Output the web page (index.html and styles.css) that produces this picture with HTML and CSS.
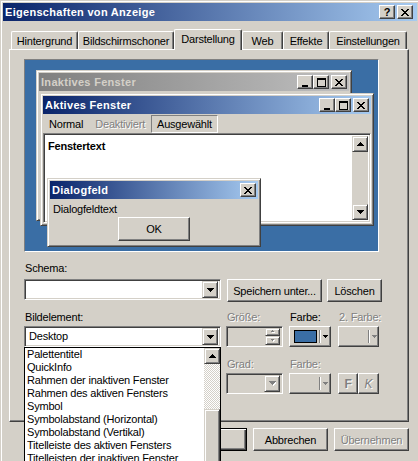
FILE: index.html
```html
<!DOCTYPE html>
<html lang="de">
<head>
<meta charset="utf-8">
<title>Eigenschaften von Anzeige</title>
<link rel="stylesheet" href="styles.css">
</head>
<body>
<div class="win">
  <div class="titlebar">
    <span class="title-text">Eigenschaften von Anzeige</span>
    <div class="cap-btns">
      <span class="cap raised help">?</span>
      <span class="cap raised"><svg class="g" width="9" height="9" viewBox="0 0 9 9" shape-rendering="crispEdges"><path d="M0 1h2v1H0zM6 1h2v1H6zM1 2h2v1H1zM5 2h2v1H5zM2 3h4v1H2zM3 4h2v1H3zM2 5h4v1H2zM1 6h2v1H1zM5 6h2v1H5zM0 7h2v1H0zM6 7h2v1H6z"/></svg></span>
    </div>
  </div>

  <div class="tabs">
    <div class="tab t-hint">Hintergrund</div>
    <div class="tab t-bild">Bildschirmschoner</div>
    <div class="tab sel t-dar">Darstellung</div>
    <div class="tab t-web">Web</div>
    <div class="tab t-eff">Effekte</div>
    <div class="tab t-ein">Einstellungen</div>
  </div>

  <div class="panel">
    <div class="preview">
      <div class="pwin inactive">
        <div class="ptitle gray">
          <span class="ptext">Inaktives Fenster</span>
          <div class="pcaps">
            <span class="cap raised"><svg width="9" height="9" viewBox="0 0 9 9" shape-rendering="crispEdges"><path d="M1 7h6v2H1z"/></svg></span>
            <span class="cap raised"><svg width="9" height="9" viewBox="0 0 9 9" shape-rendering="crispEdges" fill-rule="evenodd"><path d="M0 0h9v9H0zM1 2v6h7V2z"/></svg></span>
            <span class="cap raised close"><svg width="9" height="9" viewBox="0 0 9 9" shape-rendering="crispEdges"><path d="M0 1h2v1H0zM6 1h2v1H6zM1 2h2v1H1zM5 2h2v1H5zM2 3h4v1H2zM3 4h2v1H3zM2 5h4v1H2zM1 6h2v1H1zM5 6h2v1H5zM0 7h2v1H0zM6 7h2v1H6z"/></svg></span>
          </div>
        </div>
      </div>

      <div class="pwin active">
        <div class="ptitle blue">
          <span class="ptext">Aktives Fenster</span>
          <div class="pcaps">
            <span class="cap raised"><svg width="9" height="9" viewBox="0 0 9 9" shape-rendering="crispEdges"><path d="M1 7h6v2H1z"/></svg></span>
            <span class="cap raised"><svg width="9" height="9" viewBox="0 0 9 9" shape-rendering="crispEdges" fill-rule="evenodd"><path d="M0 0h9v9H0zM1 2v6h7V2z"/></svg></span>
            <span class="cap raised close"><svg width="9" height="9" viewBox="0 0 9 9" shape-rendering="crispEdges"><path d="M0 1h2v1H0zM6 1h2v1H6zM1 2h2v1H1zM5 2h2v1H5zM2 3h4v1H2zM3 4h2v1H3zM2 5h4v1H2zM1 6h2v1H1zM5 6h2v1H5zM0 7h2v1H0zM6 7h2v1H6z"/></svg></span>
          </div>
        </div>
        <div class="menu">
          <span class="mi">Normal</span>
          <span class="mi dis">Deaktiviert</span>
          <span class="mi sel">Ausgewählt</span>
        </div>
        <div class="client sunken">
          <div class="ctext">Fenstertext</div>
          <div class="vscroll">
            <span class="sbtn raised2"><svg width="7" height="4" viewBox="0 0 7 4" shape-rendering="crispEdges"><path d="M3 0h1v1h1v1h1v1h1v1H0V3h1V2h1V1h1z"/></svg></span>
            <span class="strack"></span>
            <span class="sbtn raised2"><svg width="7" height="4" viewBox="0 0 7 4" shape-rendering="crispEdges"><path d="M0 0h7v1H6v1H5v1H4v1H3V3H2V2H1V1H0z"/></svg></span>
          </div>
        </div>
      </div>

      <div class="pwin dialog">
        <div class="ptitle blue">
          <span class="ptext">Dialogfeld</span>
          <div class="pcaps">
            <span class="cap raised"><svg width="9" height="9" viewBox="0 0 9 9" shape-rendering="crispEdges"><path d="M0 1h2v1H0zM6 1h2v1H6zM1 2h2v1H1zM5 2h2v1H5zM2 3h4v1H2zM3 4h2v1H3zM2 5h4v1H2zM1 6h2v1H1zM5 6h2v1H5zM0 7h2v1H0zM6 7h2v1H6z"/></svg></span>
          </div>
        </div>
        <div class="dtext">Dialogfeldtext</div>
        <div class="drow"><span class="btn raised dok">OK</span></div>
      </div>
    </div>

    <div class="lbl schema-lbl">Schema:</div>
    <div class="schema-row">
      <div class="combo sunken wide">
        <span class="cval"></span>
        <span class="dd raised2"><svg width="7" height="4" viewBox="0 0 7 4" shape-rendering="crispEdges"><path d="M0 0h7v1H6v1H5v1H4v1H3V3H2V2H1V1H0z"/></svg></span>
      </div>
      <span class="btn raised b-save">Speichern unter...</span>
      <span class="btn raised b-del">Löschen</span>
    </div>

    <div class="grid">
      <div class="lbl r1 c1">Bildelement:</div>
      <div class="lbl r1 c2 dis">Größe:</div>
      <div class="lbl r1 c3">Farbe:</div>
      <div class="lbl r1 c4 dis">2. Farbe:</div>

      <div class="combo sunken c1">
        <span class="cval">Desktop</span>
        <span class="dd raised2"><svg width="7" height="4" viewBox="0 0 7 4" shape-rendering="crispEdges"><path d="M0 0h7v1H6v1H5v1H4v1H3V3H2V2H1V1H0z"/></svg></span>
      </div>
      <div class="combo sunken off c2">
        <span class="cval"></span>
        <span class="spin">
          <span class="sp raised2 top"><svg width="6" height="4" viewBox="0 0 6 4" shape-rendering="crispEdges"><path fill="#fff" d="M3 1h1v1h1v1H2V2h1z"/><path fill="#808080" d="M2 0h1v1h1v1H1V1h1z"/></svg></span>
          <span class="sp raised2 bot"><svg width="6" height="4" viewBox="0 0 6 4" shape-rendering="crispEdges"><path fill="#fff" d="M2 1h3v1H4v1H3V2H2z"/><path fill="#808080" d="M1 0h3v1H3v1H2V1H1z"/></svg></span>
        </span>
      </div>
      <div class="cbtn raised c3">
        <span class="swatch"></span>
        <span class="divider"></span>
        <svg width="5" height="3" viewBox="0 0 5 3" shape-rendering="crispEdges"><path d="M0 0h5v1H4v1H3v1H2V2H1V1H0z"/></svg>
      </div>
      <div class="cbtn raised off c4">
        <span class="swatch"></span>
        <span class="divider"></span>
        <svg width="5" height="3" viewBox="0 0 5 3" shape-rendering="crispEdges"><path fill="#808080" d="M0 0h5v1H4v1H3v1H2V2H1V1H0z"/></svg>
      </div>

      <div class="lbl r3 c2 dis">Grad:</div>
      <div class="lbl r3 c3 dis">Farbe:</div>

      <div class="combo sunken off c2">
        <span class="cval"></span>
        <span class="dd raised2"><svg width="7" height="5" viewBox="0 0 7 5" shape-rendering="crispEdges"><path fill="#fff" d="M1 1h7v1H7v1H6v1H5v1H4V4H3V3H2V2H1z"/><path fill="#808080" d="M0 0h7v1H6v1H5v1H4v1H3V3H2V2H1V1H0z"/></svg></span>
      </div>
      <div class="cbtn raised off c3">
        <span class="swatch"></span>
        <span class="divider"></span>
        <svg width="5" height="3" viewBox="0 0 5 3" shape-rendering="crispEdges"><path fill="#808080" d="M0 0h5v1H4v1H3v1H2V2H1V1H0z"/></svg>
      </div>
      <div class="fk c4">
        <span class="btn raised sq bold dis">F</span>
        <span class="btn raised sq ital dis">K</span>
      </div>
    </div>
  </div>

  <div class="actions">
    <span class="btn raised act def">OK</span>
    <span class="btn raised act">Abbrechen</span>
    <span class="btn raised act dis">Übernehmen</span>
  </div>
</div>

<div class="droplist">
  <div class="items">
    <div class="it">Palettentitel</div>
    <div class="it">QuickInfo</div>
    <div class="it">Rahmen der inaktiven Fenster</div>
    <div class="it">Rahmen des aktiven Fensters</div>
    <div class="it">Symbol</div>
    <div class="it">Symbolabstand (Horizontal)</div>
    <div class="it">Symbolabstand (Vertikal)</div>
    <div class="it">Titelleiste des aktiven Fensters</div>
    <div class="it">Titelleisten der inaktiven Fenster</div>
  </div>
  <div class="lscroll">
    <span class="sbtn raised2"><svg width="7" height="4" viewBox="0 0 7 4" shape-rendering="crispEdges"><path d="M3 0h1v1h1v1h1v1h1v1H0V3h1V2h1V1h1z"/></svg></span>
    <span class="checker"></span>
    <span class="thumb raised2"></span>
  </div>
</div>
</body>
</html>
```

FILE: styles.css
```css
* { box-sizing: border-box; }

body {
  margin: 0;
  width: 418px;
  height: 461px;
  overflow: hidden;
  position: relative;
  background: #d4d0c8;
  font-family: "Liberation Sans", Arial, sans-serif;
  font-size: 11px;
  letter-spacing: -0.2px;
  color: #000;
}

/* generic 3D styles */
.raised {
  background: #d4d0c8;
  border: 1px solid;
  border-color: #fff #404040 #404040 #fff;
  box-shadow: inset -1px -1px #808080;
}
.raised2 {
  background: #d4d0c8;
  border: 1px solid;
  border-color: #d4d0c8 #404040 #404040 #d4d0c8;
  box-shadow: inset 1px 1px #fff, inset -1px -1px #808080;
}
.sunken {
  border: 1px solid;
  border-color: #808080 #fff #fff #808080;
  box-shadow: inset 1px 1px #404040, inset -1px -1px #d4d0c8;
}
.dis {
  color: #808080;
  text-shadow: 1px 1px 0 #fff;
}

/* window */
.win {
  width: 420px;
  height: 470px;
  border-top: 1px solid #d4d0c8;
  border-left: 1px solid #d4d0c8;
  padding: 2px 3px 0 2px;
  box-shadow: inset 1px 1px #fff;
}

.titlebar {
  height: 18px;
  display: flex;
  align-items: center;
  justify-content: space-between;
  padding: 0 4px 0 2px;
  background: linear-gradient(to right, #0a246a, #a6caf0);
  color: #fff;
  font-weight: bold;
}
.title-text { letter-spacing: 0.3px; }

.cap-btns { display: flex; gap: 2px; }
.cap {
  width: 16px;
  height: 14px;
  display: flex;
  align-items: center;
  justify-content: center;
  color: #000;
}
.cap svg { display: block; }
.help {
  font-weight: bold;
  font-size: 11px;
  letter-spacing: 0;
  line-height: 12px;
}

/* tabs */
.tabs {
  display: flex;
  align-items: flex-end;
  height: 20px;
  margin-top: 8px;
  padding-left: 8px;
}
.tab {
  height: 18px;
  border-top: 1px solid #fff;
  border-left: 1px solid #fff;
  border-right: 1px solid #404040;
  box-shadow: inset -1px 0 #808080;
  border-radius: 2px 2px 0 0;
  text-align: center;
  line-height: 13px;
  padding-top: 3px;
  background: #d4d0c8;
}
.tab.sel {
  height: 21px;
  margin-bottom: -1px;
  position: relative;
  z-index: 1;
  padding-top: 3px;
}
.t-hint { width: 67px; }
.t-bild { width: 96px; }
.t-dar { width: 68px; }
.t-web { width: 41px; }
.t-eff { width: 46px; }
.t-ein { width: 78px; }

/* panel */
.panel {
  margin-left: 6px;
  width: 400px;
  height: 373px;
  border: 1px solid;
  border-color: #fff #404040 #404040 #fff;
  box-shadow: inset -1px -1px #808080;
  padding: 9px 0 0 14px;
}

/* preview */
.preview {
  position: relative;
  width: 355px;
  height: 193px;
  background: #3a6ea5;
  border: 1px solid;
  border-color: #808080 #fff #fff #808080;
}
.pwin {
  position: absolute;
  background: #d4d0c8;
  border: 1px solid;
  border-color: #d4d0c8 #404040 #404040 #d4d0c8;
  box-shadow: inset 1px 1px #fff, inset -1px -1px #808080;
  padding: 2px;
  display: flex;
  flex-direction: column;
}
.inactive { left: 11px; top: 10px; width: 316px; height: 151px; }
.active { left: 15px; top: 33px; width: 334px; height: 133px; }
.dialog { left: 22px; top: 118px; width: 214px; height: 69px; }

.ptitle {
  height: 18px;
  flex: none;
  display: flex;
  align-items: center;
  justify-content: space-between;
  padding: 0 2px;
  font-weight: bold;
  letter-spacing: 0.3px;
}
.ptitle.gray {
  background: linear-gradient(to right, #808080, #c0c0c0);
  color: #d4d0c8;
}
.ptitle.blue {
  background: linear-gradient(to right, #0a246a, #a6caf0);
  color: #fff;
}
.pcaps { display: flex; }
.pcaps .close { margin-left: 2px; }

.menu {
  display: flex;
  height: 19px;
  padding-top: 1px;
  flex: none;
}
.mi {
  height: 18px;
  line-height: 16px;
  padding: 0 5px;
  border: 1px solid transparent;
}
.mi.sel { border-color: #808080 #fff #fff #808080; }

.client {
  height: 90px;
  flex: none;
  background: #fff;
  display: flex;
  padding: 2px;
}
.ctext {
  flex: 1;
  font-weight: bold;
  padding: 4px 0 0 2px;
  line-height: 13px;
}
.vscroll {
  width: 16px;
  display: flex;
  flex-direction: column;
  background: #d4d0c8;
}
.sbtn {
  width: 16px;
  height: 16px;
  flex: none;
  display: flex;
  align-items: center;
  justify-content: center;
}
.sbtn svg { display: block; }
.strack { flex: 1; }

.dtext {
  margin-top: 4px;
  padding-left: 3px;
  line-height: 13px;
  height: 13px;
}
.drow {
  display: flex;
  justify-content: center;
  margin-top: 1px;
}
.btn {
  display: flex;
  align-items: center;
  justify-content: center;
  white-space: nowrap;
}
.dok { width: 72px; height: 24px; }

/* schema row */
.lbl {
  height: 13px;
  line-height: 13px;
  padding-left: 1px;
  white-space: nowrap;
}
.schema-lbl { margin-top: 10px; }
.schema-row {
  display: flex;
  align-items: flex-start;
  margin-top: 4px;
  height: 23px;
}
.combo {
  height: 21px;
  display: flex;
  align-items: center;
  justify-content: space-between;
  padding: 2px;
  background: #fff;
}
.combo.wide { width: 197px; }
.combo.off { background: #d4d0c8; }
.cval { padding-left: 2px; line-height: 13px; }
.dd {
  width: 16px;
  height: 17px;
  display: flex;
  align-items: center;
  justify-content: center;
}
.dd svg { display: block; }
.b-save { width: 95px; height: 23px; margin-left: 6px; }
.b-del { width: 55px; height: 23px; margin-left: 5px; }

/* grid area */
.grid {
  display: grid;
  grid-template-columns: 197px 5px 57px 6px 42px 7px 41px;
  margin-top: 9px;
}
.c1 { grid-column: 1; }
.c2 { grid-column: 3; }
.c3 { grid-column: 5; }
.c4 { grid-column: 7; }
.r1 { margin-bottom: 2px; }
.r3 { margin-top: 11px; margin-bottom: 2px; }

.spin {
  display: flex;
  flex-direction: column;
  width: 15px;
  height: 17px;
}
.sp {
  width: 15px;
  display: flex;
  align-items: center;
  justify-content: center;
}
.sp.top { height: 8px; }
.sp.bot { height: 9px; }
.sp svg { display: block; }

.cbtn {
  height: 21px;
  display: flex;
  align-items: center;
  padding-left: 4px;
}
.swatch {
  width: 23px;
  height: 13px;
  border: 1px solid #000;
  background: #3a6ea5;
  flex: none;
}
.cbtn.off .swatch { visibility: hidden; }
.divider {
  width: 2px;
  height: 13px;
  margin: 0 2px 0 2px;
  border-left: 1px solid #808080;
  border-right: 1px solid #fff;
  flex: none;
}
.cbtn svg { display: block; flex: none; }

.fk { display: flex; }
.sq { height: 21px; }
.sq.bold { width: 20px; font-weight: bold; font-size: 12px; }
.sq.ital { width: 21px; font-style: italic; font-size: 12px; }

/* bottom buttons */
.actions {
  display: flex;
  justify-content: flex-end;
  gap: 6px;
  margin-top: 6px;
  padding-right: 8px;
}
.act { width: 75px; height: 23px; }
.def {
  border-color: #000;
  box-shadow: inset 1px 1px #fff, inset -1px -1px #404040, inset -2px -2px #808080;
}

/* dropdown list overlay */
.droplist {
  position: absolute;
  left: 24px;
  top: 347px;
  width: 197px;
  height: 130px;
  border: 1px solid #000;
  background: #fff;
  display: flex;
}
.items {
  flex: 1;
  padding-left: 2px;
}
.it {
  height: 13px;
  line-height: 13px;
  white-space: nowrap;
  overflow: hidden;
}
.lscroll {
  width: 16px;
  display: flex;
  flex-direction: column;
}
.checker {
  height: 45px;
  flex: none;
  background: repeating-conic-gradient(#fff 0 25%, #d4d0c8 0 50%) 0 0 / 2px 2px;
}
.thumb { flex: 1; }
```
